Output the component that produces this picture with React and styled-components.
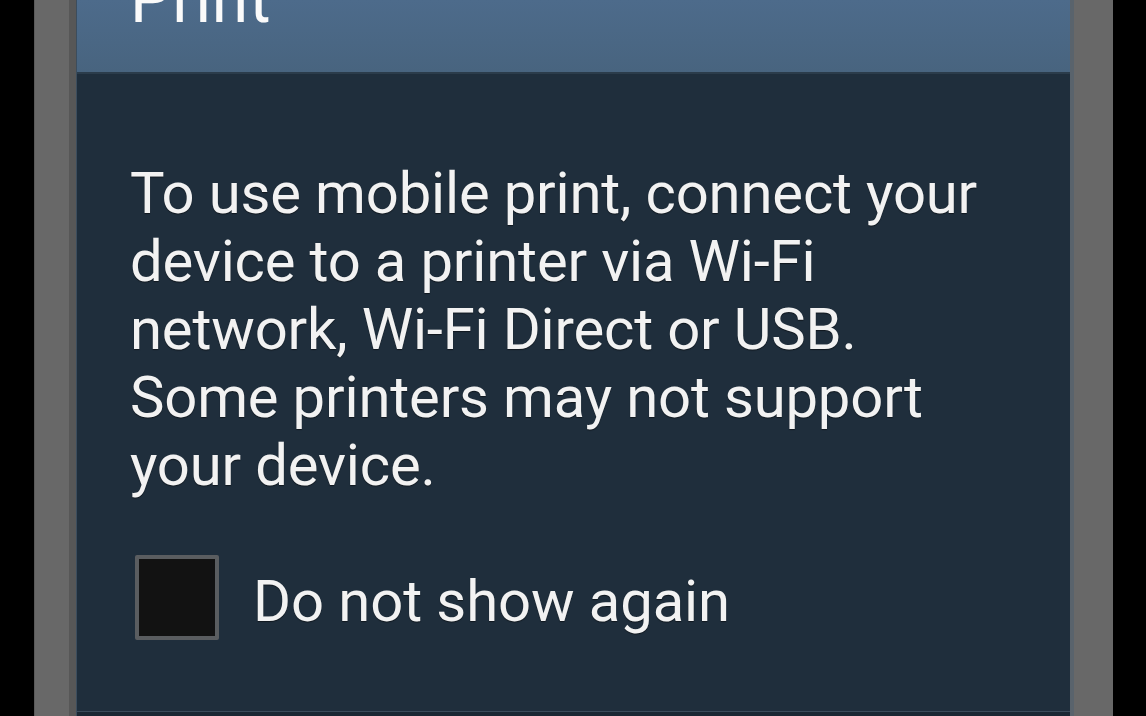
import styled, { createGlobalStyle } from 'styled-components';

const GlobalStyle = createGlobalStyle`
  html, body {
    margin: 0;
    padding: 0;
    background: #000;
    overflow: hidden;
  }
  body {
    font-family: Roboto, "Noto Sans", "DejaVu Sans", sans-serif;
  }
`;

const Screen = styled.div`
  width: 1146px;
  height: 716px;
  display: flex;
  background: #000;
`;

const Frame = styled.div`
  margin-left: 34px;
  width: 1079px;
  height: 716px;
  display: flex;
  background: #686868;
  padding-left: 41px;
  box-sizing: border-box;
  border-left: 1px solid #5a5a5a;
`;

const Dialog = styled.div`
  width: 994px;
  height: 716px;
  flex-shrink: 0;
  display: flex;
  flex-direction: column;
  background: #1f2e3c;
  box-shadow: -7px 0 0 #575757, 4px 0 0 #59636c;
  border-left: 1px solid #3c4d5d;
  box-sizing: border-box;
`;

const Header = styled.div`
  height: 72px;
  flex-shrink: 0;
  background: linear-gradient(#4d6b8b, #48647f);
  border-bottom: 2px solid #2b3c4b;
  padding-left: 53px;
  overflow: hidden;
  display: flex;
  align-items: flex-end;
`;

const Title = styled.h1`
  margin: 0 0 -2px;
  font-size: 66px;
  font-weight: 400;
  line-height: 1;
  color: #fafafa;
  letter-spacing: 0.6px;
  position: relative;
  top: -41px;
`;

const Body = styled.div`
  flex: 1;
  padding: 85px 66px 0 53px;
  display: flex;
  flex-direction: column;
`;

const Message = styled.p`
  margin: 0;
  font-size: 58px;
  line-height: 68px;
  letter-spacing: -0.18px;
  color: #f2f2f2;
  text-shadow: 0 1px 1px rgba(0, 0, 0, 0.5);
`;

const CheckRow = styled.label`
  display: flex;
  align-items: center;
  gap: 34px;
  margin-top: 56px;
  margin-left: 5px;
`;

const Box = styled.span`
  width: 76px;
  height: 77px;
  flex-shrink: 0;
  background: #121212;
  border: 4px solid #5a5d60;
  border-radius: 2px;
`;

const CheckText = styled.span`
  font-size: 58px;
  line-height: 68px;
  letter-spacing: -0.1px;
  color: #f2f2f2;
  text-shadow: 0 1px 1px rgba(0, 0, 0, 0.5);
  position: relative;
  top: 3px;
`;

const Footer = styled.div`
  height: 4px;
  border-top: 1px solid #3a4b5a;
  background: #1a2733;
`;

export default function App() {
  return (
    <>
      <GlobalStyle />
      <Screen>
        <Frame>
          <Dialog>
            <Header>
              <Title>Print</Title>
            </Header>
            <Body>
              <Message>
                To use mobile print, connect your device to a printer via Wi-Fi
                network, Wi-Fi Direct or USB. Some printers may not support your
                device.
              </Message>
              <CheckRow>
                <Box />
                <CheckText>Do not show again</CheckText>
              </CheckRow>
            </Body>
            <Footer />
          </Dialog>
        </Frame>
      </Screen>
    </>
  );
}
